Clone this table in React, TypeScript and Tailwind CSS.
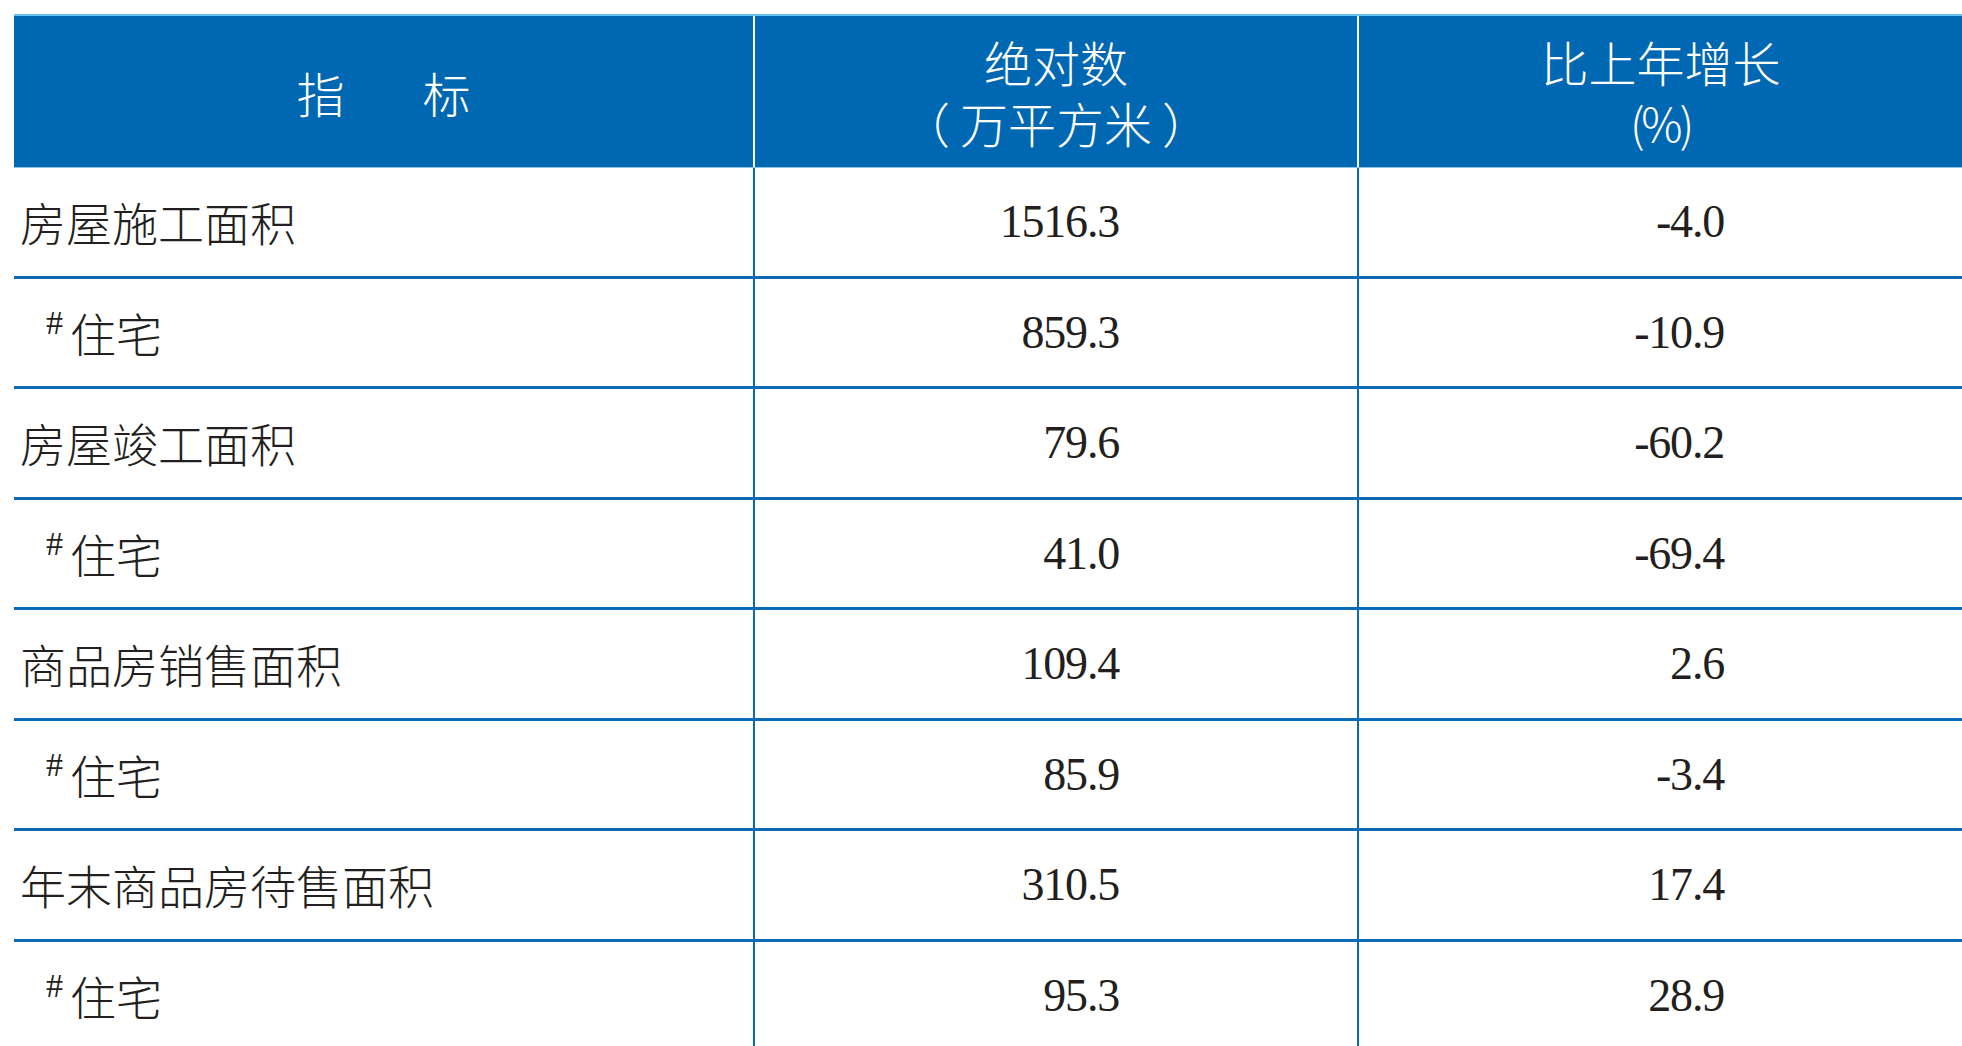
const rows = [
  { label: "房屋施工面积", value: "1516.3", growth: "-4.0" },
  { label: "住宅", sub: true, value: "859.3", growth: "-10.9" },
  { label: "房屋竣工面积", value: "79.6", growth: "-60.2" },
  { label: "住宅", sub: true, value: "41.0", growth: "-69.4" },
  { label: "商品房销售面积", value: "109.4", growth: "2.6" },
  { label: "住宅", sub: true, value: "85.9", growth: "-3.4" },
  { label: "年末商品房待售面积", value: "310.5", growth: "17.4" },
  { label: "住宅", sub: true, value: "95.3", growth: "28.9" },
];

const cjk = "font-['Noto_Sans_CJK_SC',sans-serif]";
const num = "font-['Liberation_Serif','Times_New_Roman',serif]";

export default function App() {
  return (
    <div className="h-[1046px] w-[1962px] overflow-hidden bg-white pt-[14px] pl-[14px]">
      <div className="border-t-2 border-[#66c4ee]">
        {/* Header */}
        <div
          className={`grid h-[152px] grid-cols-[741px_604px_1fr] border-b border-[#8cc4e8] bg-[#0067b2] text-white ${cjk} font-light`}
        >
          <div className="flex items-center justify-center gap-[78px] border-r-2 border-white text-[48px] leading-none">
            <span>指</span>
            <span>标</span>
          </div>
          <div className="flex flex-col items-center justify-center border-r-2 border-white text-[48px] leading-[61px]">
            <span>绝对数</span>
            <span>
              <span className="mr-[10px]">（</span>万平方米<span className="ml-[10px]">）</span>
            </span>
          </div>
          <div className="flex flex-col items-center justify-center text-[48px] leading-[61px]">
            <span>比上年增长</span>
            <span className="tracking-[-3px] text-[46px]">(%)</span>
          </div>
        </div>

        {/* Body rows */}
        {rows.map((row, i) => (
          <div
            key={i}
            className="grid h-[110.5px] grid-cols-[741px_604px_1fr] border-b-[3px] border-[#0c69b4] text-[#231f20]"
          >
            <div
              className={`flex items-center border-r-2 border-[#0c69b4] ${cjk} text-[46px] font-light ${
                row.sub ? "pl-[32px]" : "pl-[6px]"
              }`}
            >
              {row.sub && (
                <span className={`${num} mr-[7px] self-start pt-[27px] text-[34px] leading-none font-light`}>#</span>
              )}
              <span>{row.label}</span>
            </div>
            <div className={`flex items-center justify-end border-r-2 border-[#0c69b4] pr-[238px] ${num} text-[46px] tracking-[-1.2px]`}>
              {row.value}
            </div>
            <div className={`flex items-center justify-end pr-[238px] ${num} text-[46px] tracking-[-1.2px]`}>
              {row.growth}
            </div>
          </div>
        ))}
      </div>
    </div>
  );
}
